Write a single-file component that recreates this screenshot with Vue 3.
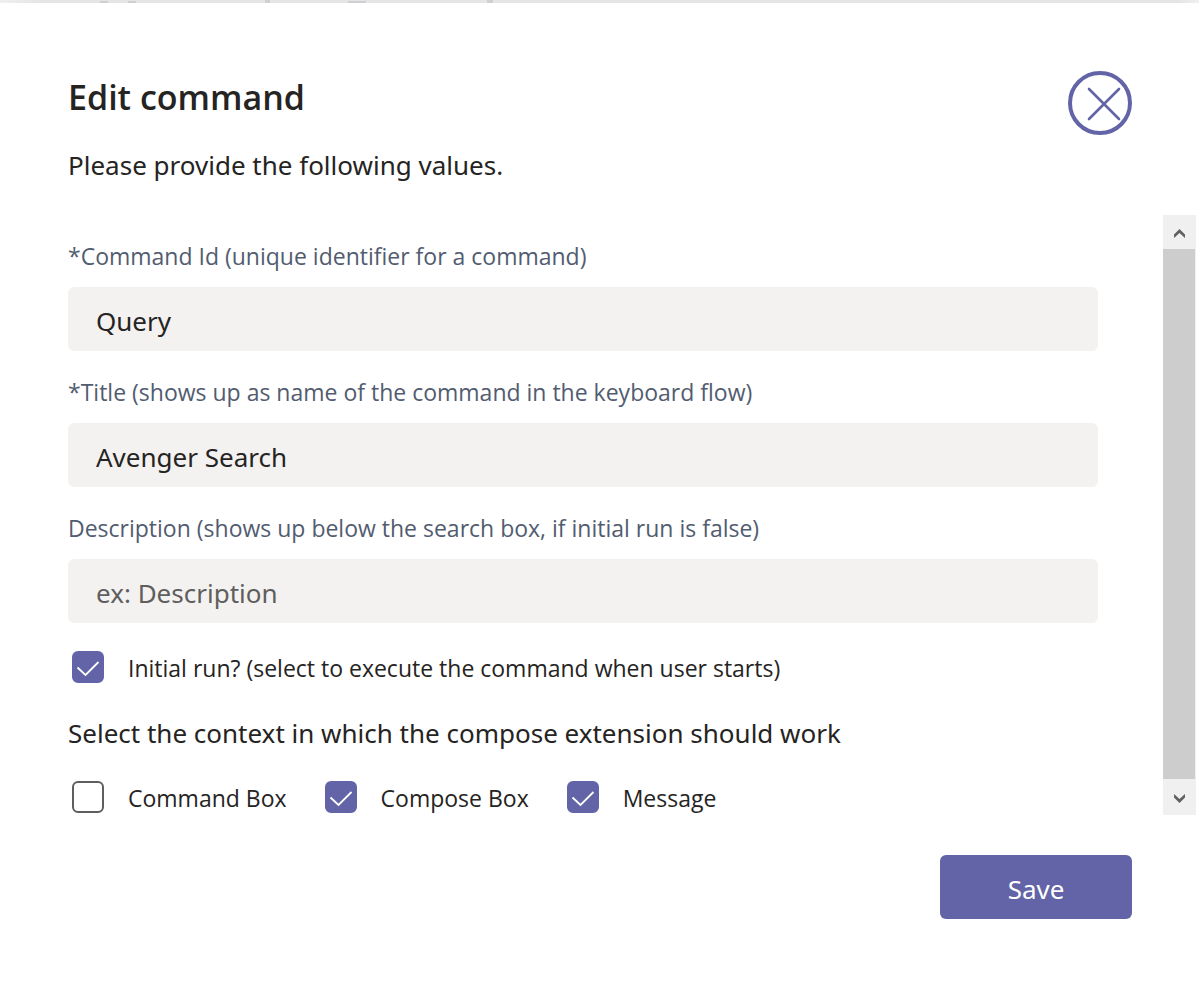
<script setup>
import { ref } from 'vue'

const fields = ref([
  { id: 'command-id', label: '*Command Id (unique identifier for a command)', value: 'Query', placeholder: '' },
  { id: 'title', label: '*Title (shows up as name of the command in the keyboard flow)', value: 'Avenger Search', placeholder: '' },
  { id: 'description', label: 'Description (shows up below the search box, if initial run is false)', value: '', placeholder: 'ex: Description' },
])
const initialRun = ref(true)
const contexts = ref([
  { id: 'command-box', label: 'Command Box', checked: false },
  { id: 'compose-box', label: 'Compose Box', checked: true },
  { id: 'message', label: 'Message', checked: true },
])
</script>

<template>
  <div class="page">
    <div class="backdrop" aria-hidden="true">
      <i class="mark m1"></i><i class="mark m2"></i><i class="mark m3"></i><i class="mark m4"></i><i class="mark m5"></i>
    </div>
    <main class="dialog">
      <header class="head">
        <div>
          <h1>Edit command</h1>
          <p class="lead">Please provide the following values.</p>
        </div>
        <button class="close" type="button" aria-label="Close">
          <svg viewBox="0 0 64 64" width="64" height="64">
            <circle cx="32" cy="32" r="30" fill="none" stroke="#6264a7" stroke-width="4" />
            <path d="M21 18 L51 48 M51 18 L21 48" stroke="#6264a7" stroke-width="2.6" stroke-linecap="round" />
          </svg>
        </button>
      </header>

      <div class="scroll">
        <form class="form">
          <div v-for="f in fields" :key="f.id" class="field">
            <label :for="f.id">{{ f.label }}</label>
            <input :id="f.id" v-model="f.value" type="text" :placeholder="f.placeholder" />
          </div>

          <label class="check">
            <input v-model="initialRun" type="checkbox" />
            <svg class="tick" viewBox="0 0 32 32"><path d="M5.5 16.5 L13.5 24 L26.5 11" /></svg>
            <span>Initial run? (select to execute the command when user starts)</span>
          </label>

          <fieldset>
            <legend>Select the context in which the compose extension should work</legend>
            <div class="options">
              <label v-for="c in contexts" :key="c.id" class="check">
                <input v-model="c.checked" type="checkbox" />
                <svg class="tick" viewBox="0 0 32 32"><path d="M5.5 16.5 L13.5 24 L26.5 11" /></svg>
                <span>{{ c.label }}</span>
              </label>
            </div>
          </fieldset>
        </form>
        <div class="bar">
          <button type="button" aria-label="Scroll up">
            <svg viewBox="0 0 11 9" width="11" height="9"><path d="M0 5.5 L5.5 0 L11 5.5 V9 L5.5 4 L0 9 Z" /></svg>
          </button>
          <div class="thumb"></div>
          <button type="button" aria-label="Scroll down">
            <svg viewBox="0 0 11 9" width="11" height="9"><path d="M0 3.5 L5.5 9 L11 3.5 V0 L5.5 5 L0 0 Z" /></svg>
          </button>
        </div>
      </div>

      <footer class="foot">
        <button class="save" type="button">Save</button>
      </footer>
    </main>
  </div>
</template>

<style>
body {
  margin: 0;
  background: #fff;
}
</style>

<style scoped>
.page {
  font-family: "Noto Sans", "Open Sans", sans-serif;
  font-size: 26px;
  color: #252423;
  min-height: 100vh;
}
h1,
.field label,
.check {
  font-family: "Open Sans", "Noto Sans", sans-serif;
}
.backdrop {
  position: relative;
  height: 3px;
  overflow: hidden;
  background: linear-gradient(90deg, #f0f0f0, #e5e5e5 40px, #e5e5e5 calc(100% - 20px), #efefef);
}
.mark {
  position: absolute;
  top: 1px;
  width: 8px;
  height: 2px;
  background: #d0d0d4;
}
.m1 { left: 100px; }
.m2 { left: 128px; }
.m3 { left: 265px; width: 5px; top: 0; height: 3px; }
.m4 { left: 348px; width: 18px; }
.m5 { left: 487px; width: 6px; top: 0; height: 3px; }
.dialog {
  padding-top: 68px;
}
.head {
  display: flex;
  justify-content: space-between;
  align-items: flex-start;
  padding: 0 67px 0 68px;
}
h1 {
  margin: 0;
  font-size: 34px;
  line-height: 52px;
  font-weight: 600;
}
.lead {
  margin: 24px 0 0;
  line-height: 36px;
}
button {
  border: 0;
  padding: 0;
  font: inherit;
  cursor: pointer;
}
.close {
  background: none;
  display: block;
  flex: none;
  height: 64px;
}
.close svg {
  display: block;
}
.scroll {
  display: flex;
  margin: 32px 3px 0 0;
}
.form {
  flex: 1;
  padding: 26px 65px 0 68px;
}
.field {
  margin-bottom: 26px;
}
.field label {
  display: block;
  font-size: 23px;
  line-height: 30px;
  margin-bottom: 16px;
  color: #525c70;
}
.field input {
  display: block;
  box-sizing: border-box;
  width: 100%;
  height: 64px;
  padding: 4px 28px 0;
  border: 0;
  border-radius: 6px;
  background: #f3f2f1;
  font: inherit;
  color: inherit;
  outline: none;
}
.field input::placeholder {
  color: #605e5c;
  opacity: 1;
}
.check {
  display: flex;
  align-items: center;
  font-size: 23px;
  line-height: 32px;
  height: 36px;
  padding-left: 4px;
  position: relative;
  white-space: nowrap;
}
.check input {
  appearance: none;
  flex: none;
  width: 32px;
  height: 32px;
  margin: 0 24px 0 0;
  border: 2px solid #605e5c;
  border-radius: 6px;
  background: #fff;
}
.check input:checked {
  background: #6264a7;
  border-color: #6264a7;
}
.check span {
  padding-top: 2px;
}
.tick {
  position: absolute;
  left: 4px;
  top: 2px;
  width: 32px;
  height: 32px;
  pointer-events: none;
  visibility: hidden;
}
.check input:checked + .tick {
  visibility: visible;
}
.tick path {
  fill: none;
  stroke: #fff;
  stroke-width: 1.8;
}
fieldset {
  border: 0;
  margin: 30px 0 0;
  padding: 0;
  min-width: 0;
}
legend {
  padding: 0;
  line-height: 36px;
}
.options {
  display: flex;
  gap: 34px;
  padding-top: 28px;
}
.bar {
  display: flex;
  flex-direction: column;
  width: 33px;
  background: #f0f0f0;
}
.bar button {
  flex: none;
  display: flex;
  align-items: center;
  justify-content: center;
  box-sizing: border-box;
  height: 36px;
  padding-top: 3px;
  background: #f0f0f0;
}
.bar button:first-child {
  height: 34px;
}
.bar path {
  fill: #606060;
}
.thumb {
  flex: 1;
  margin-right: 1px;
  background: #cdcdcd;
}
.foot {
  display: flex;
  justify-content: flex-end;
  padding: 40px 67px 68px;
}
.save {
  width: 192px;
  height: 64px;
  padding-top: 4px;
  border-radius: 6px;
  background: #6264a7;
  color: #fff;
}
</style>
